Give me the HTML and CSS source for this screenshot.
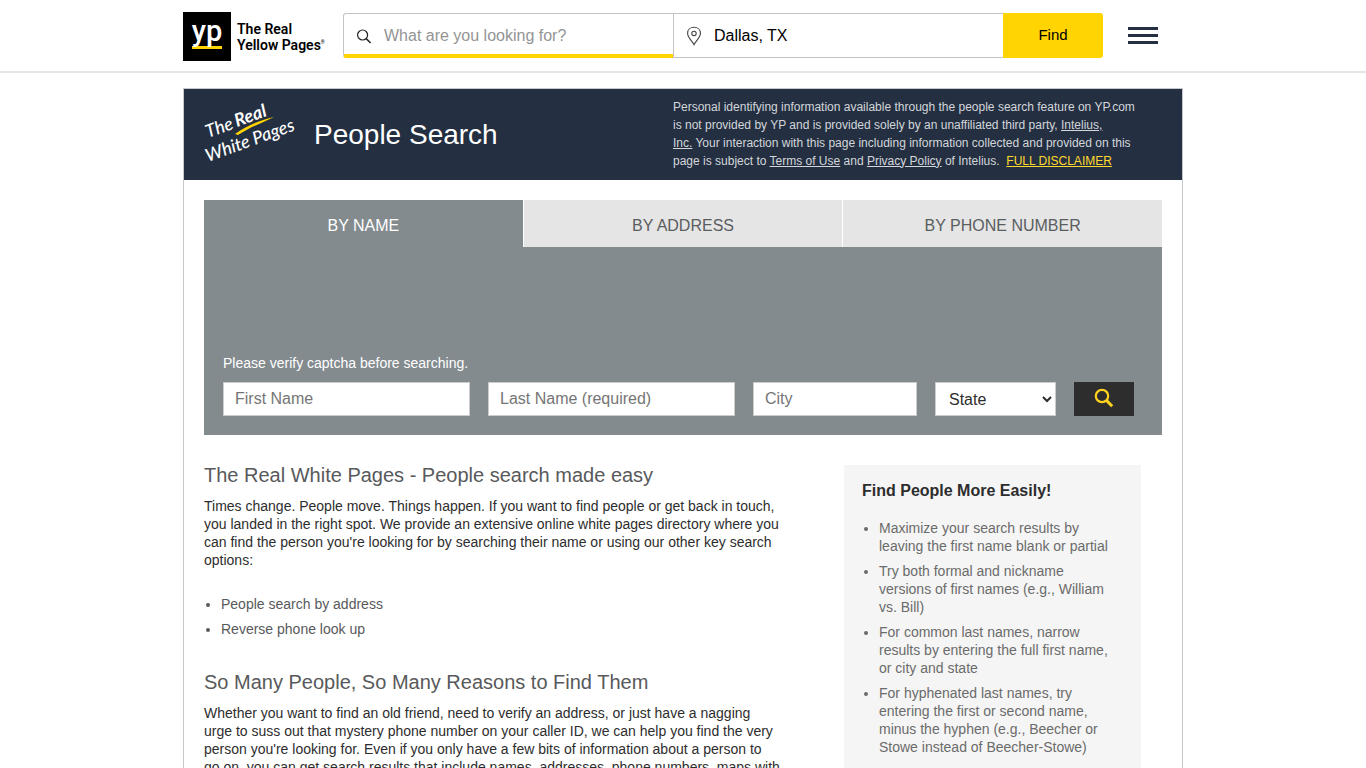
FILE: index.html
```html
<!DOCTYPE html>
<html lang="en">
<head>
    <meta charset="UTF-8">
    <meta name="viewport" content="width=device-width, initial-scale=1.0">
    <title>People Search</title>
    <link rel="stylesheet" href="styles.css">
</head>
<body>
    <header class="site-header">
        <div class="header-inner">
            <a class="logo" href="#">
                <span class="logo-box"><span class="logo-yp">yp</span></span>
                <span class="logo-text">The Real<br>Yellow Pages<sup>®</sup></span>
            </a>
            <form class="site-search">
                <label class="search-field search-what">
                    <svg width="16" height="16" viewBox="0 0 16 16" fill="none" stroke="#222" stroke-width="1.2" aria-hidden="true">
                        <circle cx="6.6" cy="7" r="5"/>
                        <path d="M10.2 10.6L14.6 15" stroke-width="1.5"/>
                    </svg>
                    <input type="text" placeholder="What are you looking for?" aria-label="What are you looking for?">
                </label>
                <label class="search-field search-where">
                    <svg width="16" height="20" viewBox="0 0 16 20" fill="none" stroke="#444" stroke-width="1.1" aria-hidden="true">
                        <path d="M8 18.6C6.4 15.2 1.6 11.6 1.6 7.2C1.6 3.5 4.4 1.2 8 1.2S14.4 3.5 14.4 7.2C14.4 11.6 9.6 15.2 8 18.6Z"/>
                        <circle cx="8" cy="7.4" r="2.2"/>
                    </svg>
                    <input type="text" value="Dallas, TX" aria-label="Location">
                </label>
                <button class="find-button" type="submit">Find</button>
            </form>
            <button class="menu-button" type="button" aria-label="Menu">
                <span></span>
                <span></span>
                <span></span>
            </button>
        </div>
    </header>

    <main class="page">
        <div class="banner">
            <svg class="wp-logo" width="100" height="66" viewBox="0 0 100 66" role="img" aria-label="The Real White Pages">
                <g class="wp-script">
                    <text transform="translate(4 36) rotate(-20)">The</text>
                    <text class="wp-real" transform="translate(33 25) rotate(-20)">Real</text>
                    <text transform="translate(4 60) rotate(-20)">White Pages</text>
                </g>
                <path d="M31 32C42 24 56 18 70 15C58 21 46 25 34 33Z" fill="#ffd400"/>
            </svg>
            <h1>People Search</h1>
            <p class="disclaimer">Personal identifying information available through the people search feature on YP.com is not provided by YP and is provided solely by an unaffiliated third party, <a href="#">Intelius,<br>Inc.</a> Your interaction with this page including information collected and provided on this page is subject to <a href="#">Terms of Use</a> and <a href="#">Privacy Policy</a> of Intelius. &nbsp;<a class="full" href="#">FULL DISCLAIMER</a></p>
        </div>

        <div class="content">
            <nav class="tabs">
                <a class="active" href="#">BY NAME</a>
                <a href="#">BY ADDRESS</a>
                <a href="#">BY PHONE NUMBER</a>
            </nav>
            <form class="people-form">
                <p>Please verify captcha before searching.</p>
                <div class="form-row">
                    <input class="name" type="text" placeholder="First Name" aria-label="First Name">
                    <input class="name" type="text" placeholder="Last Name (required)" aria-label="Last Name (required)">
                    <input class="city" type="text" placeholder="City" aria-label="City">
                    <select aria-label="State">
                        <option>State</option>
                    </select>
                    <button type="submit" aria-label="Search">
                        <svg width="20" height="20" viewBox="0 0 20 20" fill="none" stroke="#ffd21f" aria-hidden="true">
                            <circle cx="8" cy="8" r="6.2" stroke-width="2.2"/>
                            <path d="M12.4 12.4L18.2 18.2" stroke-width="3"/>
                        </svg>
                    </button>
                </div>
            </form>

            <div class="columns">
                <article>
                    <section>
                        <h2>The Real White Pages - People search made easy</h2>
                        <p>Times change. People move. Things happen. If you want to find people or get back in touch, you landed in the right spot. We provide an extensive online white pages directory where you can find the person you're looking for by searching their name or using our other key search options:</p>
                        <ul>
                            <li>People search by address</li>
                            <li>Reverse phone look up</li>
                        </ul>
                    </section>
                    <section>
                        <h2>So Many People, So Many Reasons to Find Them</h2>
                        <p>Whether you want to find an old friend, need to verify an address, or just have a nagging<br>urge to suss out that mystery phone number on your caller ID, we can help you find the very person you're looking for. Even if you only have a few bits of information about a person to go on, you can get search results that include names, addresses, phone numbers, maps with</p>
                    </section>
                </article>
                <aside>
                    <h3>Find People More Easily!</h3>
                    <ul>
                        <li>Maximize your search results by leaving the first name blank or partial</li>
                        <li>Try both formal and nickname versions of first names (e.g., William vs. Bill)</li>
                        <li>For common last names, narrow results by entering the full first name, or city and state</li>
                        <li>For hyphenated last names, try entering the first or second name, minus the hyphen (e.g., Beecher or Stowe instead of Beecher-Stowe)</li>
                    </ul>
                </aside>
            </div>
        </div>
    </main>
</body>
</html>
```

FILE: styles.css
```css
* {
    margin: 0;
    padding: 0;
    box-sizing: border-box;
}

body {
    font-family: "Liberation Sans", Arial, sans-serif;
    font-size: 14px;
    line-height: 18px;
    color: #2d2d2d;
    background: #fff;
}

input,
select,
button {
    font-family: inherit;
    font-size: 16px;
    border-radius: 0;
    outline: none;
}

button {
    border: none;
    cursor: pointer;
}

/* Header */
.site-header {
    padding: 12px 0 10px;
    border-bottom: 2px solid #e5e5e5;
}

.header-inner {
    display: flex;
    align-items: center;
    max-width: 1000px;
    margin: 0 auto;
}

.logo {
    display: flex;
    align-items: center;
    gap: 6px;
    width: 160px;
    color: #000;
    text-decoration: none;
}

.logo-box {
    display: flex;
    justify-content: center;
    width: 48px;
    height: 49px;
    padding-top: 6px;
    background: #000;
}

.logo-yp {
    height: 31px;
    border-bottom: 3px solid #ffd400;
    color: #fff;
    font-family: Roboto, sans-serif;
    font-size: 29px;
    font-weight: 500;
    line-height: 26px;
}

.logo-text {
    font-family: Roboto, sans-serif;
    font-size: 14px;
    font-weight: 600;
    line-height: 16px;
    white-space: nowrap;
}

.logo-text sup {
    font-size: 5px;
    font-weight: 400;
    line-height: 0;
}

.site-search {
    display: flex;
    flex: 1;
    height: 45px;
    margin-bottom: 2px;
}

.search-field {
    display: flex;
    flex: 1;
    align-items: center;
    gap: 12px;
    padding-left: 12px;
    border: 1px solid #c4c4c4;
}

.search-field input {
    flex: 1;
    min-width: 0;
    border: none;
    background: none;
    color: #000;
}

.search-field input::placeholder {
    color: #949494;
}

.search-what {
    border-right: none;
    border-bottom: 4px solid #ffd400;
    border-radius: 3px 0 0 3px;
    padding-top: 3px;
}

.search-where {
    border-right: none;
}

.find-button {
    width: 100px;
    padding-bottom: 2px;
    background: #ffd400;
    color: #000;
    font-size: 15px;
    border-radius: 0 3px 3px 0;
}

.menu-button {
    display: flex;
    flex-direction: column;
    gap: 4px;
    width: 30px;
    margin: 0 25px 2px;
    background: none;
}

.menu-button span {
    width: 100%;
    height: 3px;
    background: #243042;
}

/* Page */
.page {
    max-width: 1000px;
    margin: 15px auto 0;
    border: 1px solid #c5c8cc;
    border-bottom: none;
}

.banner {
    display: flex;
    align-items: center;
    height: 91px;
    padding: 0 20px;
    background: #243042;
    color: #fff;
}

.wp-logo {
    overflow: visible;
}

.wp-script {
    fill: #fff;
    font-family: Lato, sans-serif;
    font-size: 18px;
    font-style: italic;
    font-weight: 500;
}

.wp-real {
    font-weight: 700;
}

.banner h1 {
    margin-left: 10px;
    font-size: 28px;
    font-weight: 400;
    line-height: 32px;
}

.disclaimer {
    width: 489px;
    margin-left: auto;
    padding: 0 20px 2px 0;
    color: #d3d6da;
    font-size: 12px;
}

.disclaimer a {
    color: inherit;
}

.disclaimer .full {
    color: #ffd92e;
}

.content {
    padding: 20px;
}

.tabs {
    display: flex;
    gap: 1px;
}

.tabs a {
    flex: 1;
    padding: 17px 0 12px;
    background: #e5e5e5;
    color: #5a5d60;
    font-size: 16px;
    text-align: center;
    text-decoration: none;
}

.tabs .active {
    background: #838b8f;
    color: #fff;
}

.people-form {
    padding: 107px 28px 19px 19px;
    background: #838b8f;
    color: #fff;
}

.form-row {
    display: flex;
    gap: 18px;
    margin-top: 10px;
}

.form-row input,
.form-row select {
    min-width: 0;
    height: 34px;
    padding: 0 11px;
    border: 1px solid #ccc;
    background: #fff;
    color: #2d2d2d;
}

.form-row input::placeholder {
    color: #757575;
}

.form-row .name {
    flex: 1;
}

.form-row .city {
    width: 164px;
}

.form-row select {
    width: 121px;
    padding: 0 0 0 9px;
}

.form-row button {
    display: flex;
    justify-content: center;
    width: 60px;
    padding-top: 6px;
    background: #2d2d2d;
}

.columns {
    display: flex;
    align-items: flex-start;
    justify-content: space-between;
    padding: 30px 21px 0 0;
}

article {
    width: 576px;
}

section {
    margin-bottom: 34px;
}

h2 {
    margin-bottom: 12px;
    color: #58595b;
    font-size: 20px;
    font-weight: 400;
    line-height: 20px;
}

ul {
    padding-left: 17px;
    color: #58595b;
}

li + li {
    margin-top: 7px;
}

section ul {
    margin-top: 26px;
}

aside {
    width: 297px;
    padding: 17px 26px 17px 18px;
    background: #f5f5f5;
}

aside h3 {
    margin-bottom: 19px;
    font-size: 16px;
}

aside ul {
    color: #6b6b6b;
}
```
